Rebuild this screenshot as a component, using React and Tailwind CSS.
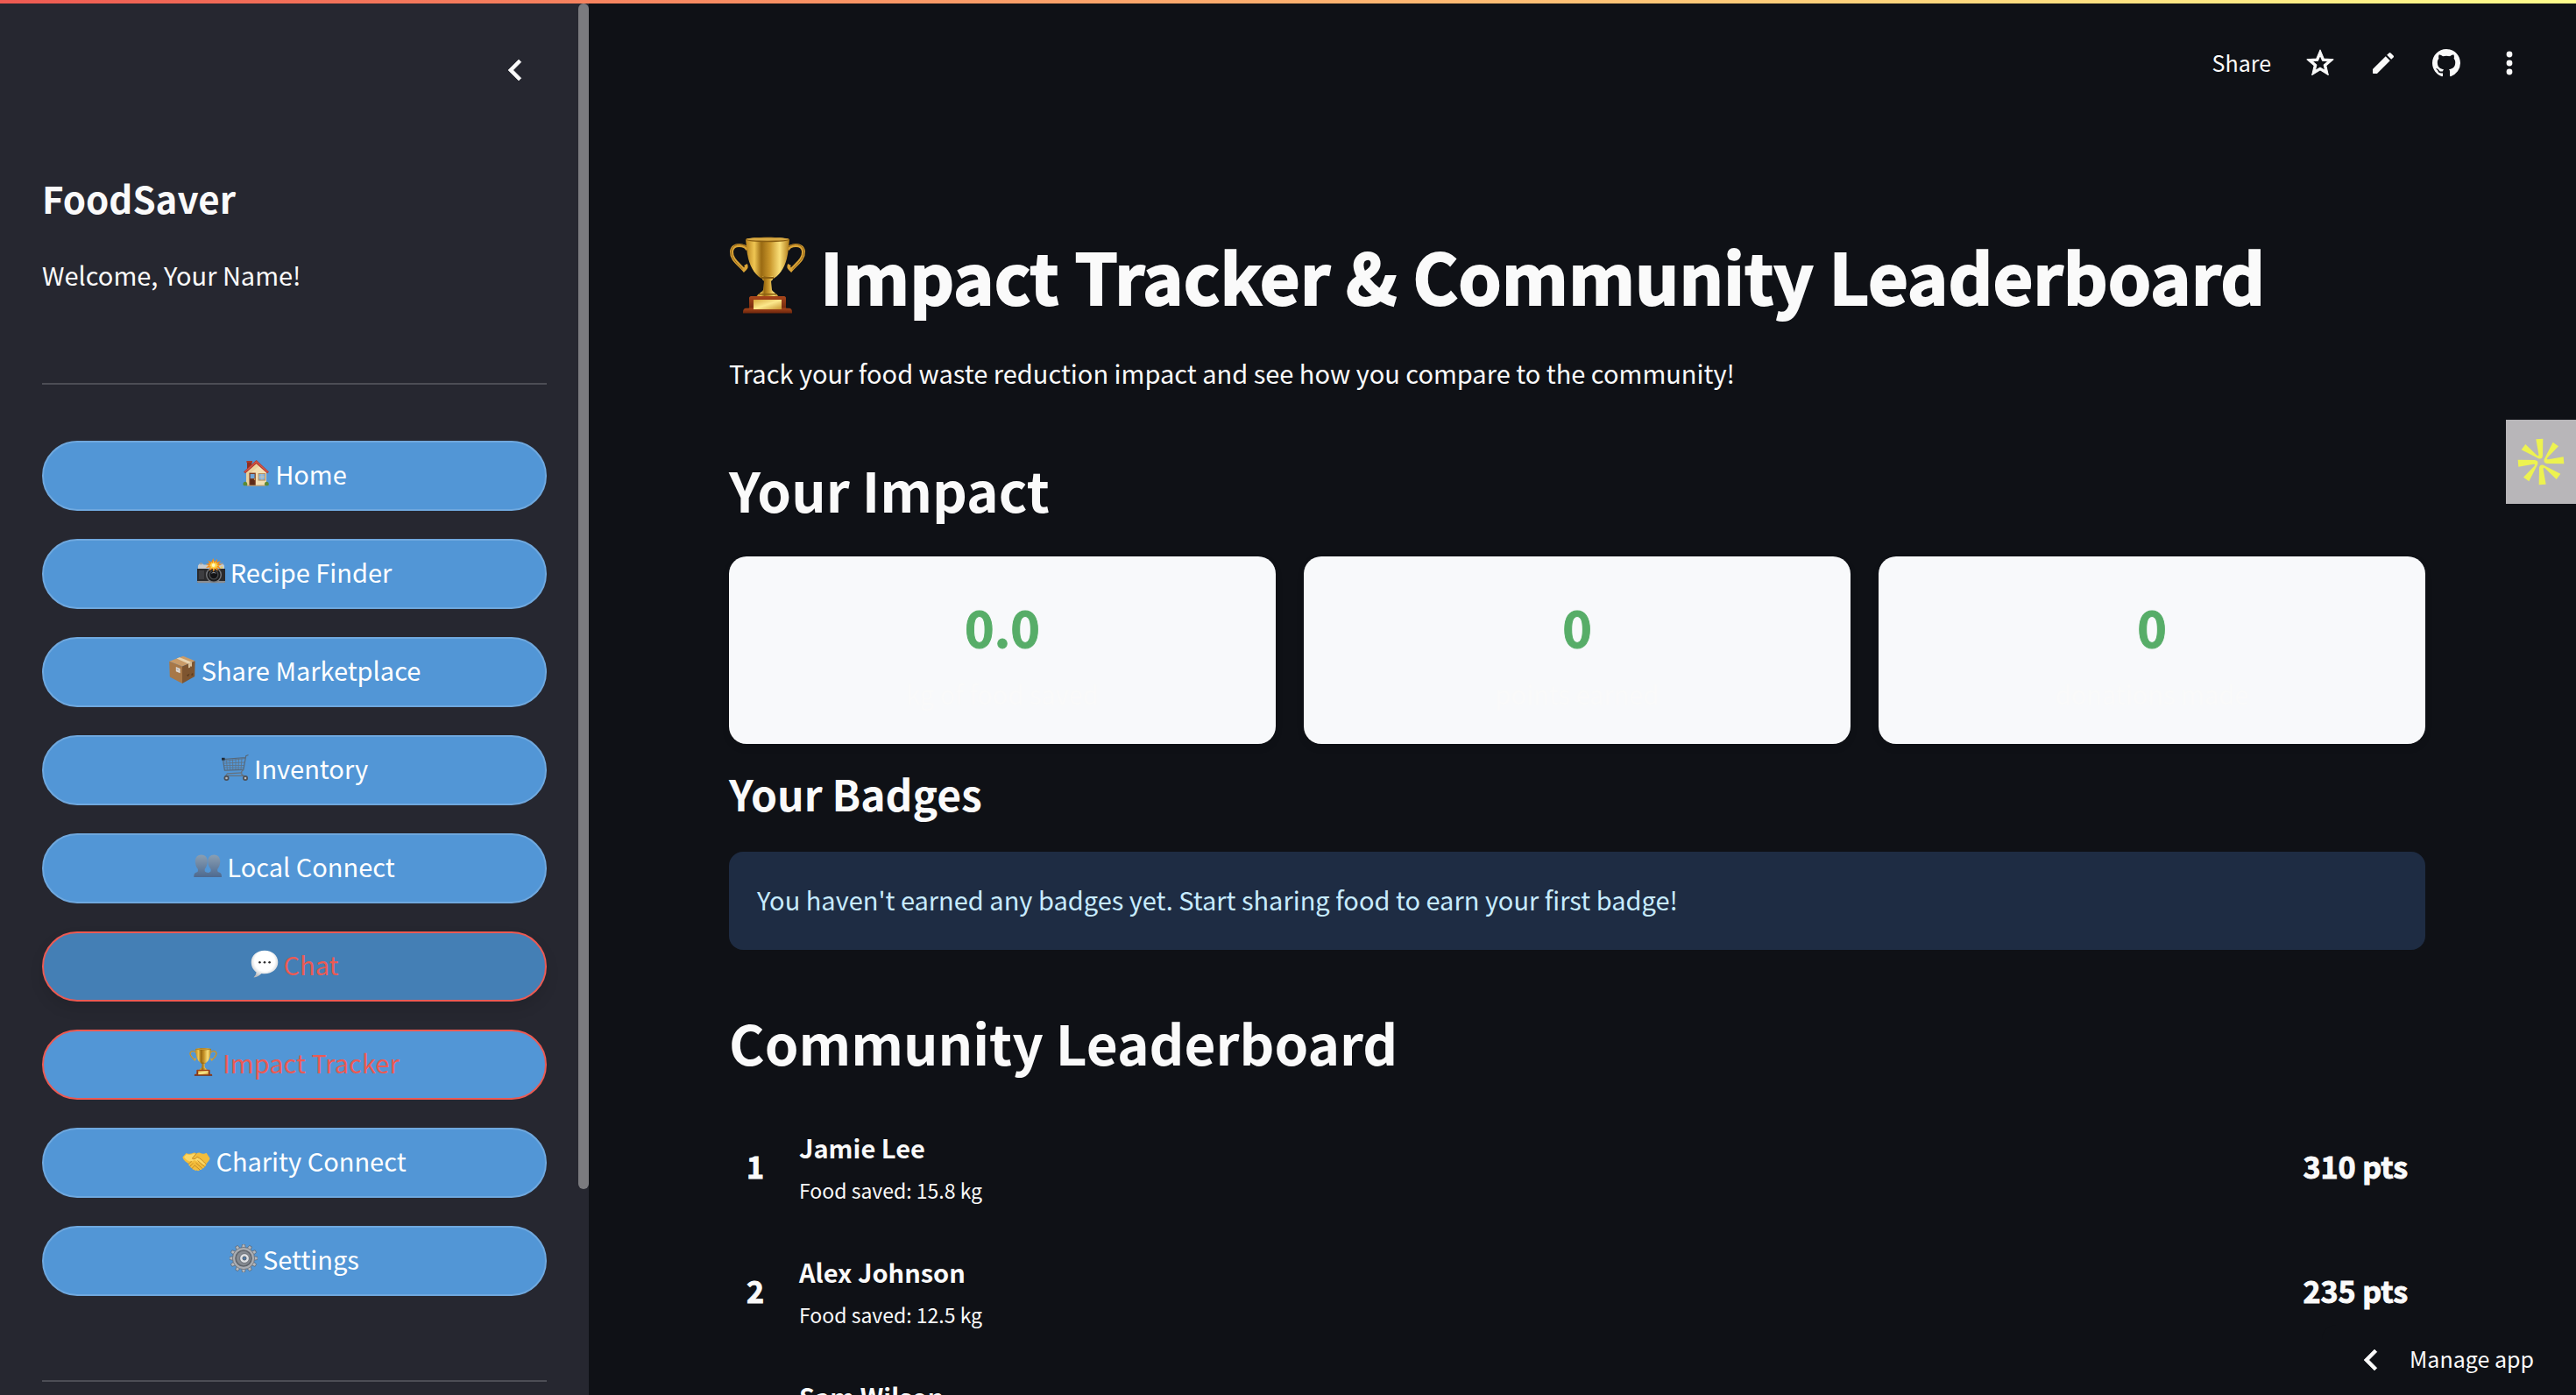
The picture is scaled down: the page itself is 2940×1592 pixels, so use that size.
import { useId } from "react";

/* ---------- Pictograms ---------- */

function HouseIcon() {
  return (
    <svg viewBox="0 0 32 32" className="size-8" aria-hidden="true">
      <path d="M6 3.2h5.4v7L6 14z" fill="#8f2e22" />
      <path d="M5.4 2h6.6v2H5.4z" fill="#a83c2c" />
      <path d="M5 15 16.5 4.5 28 15v15H5z" fill="#f3dfb2" />
      <path d="M5 15 16.5 4.5 20 7.7 8 17v13H5z" fill="#e4c990" opacity=".6" />
      <path d="M16.6 1 31 14.4l-2 1.9L16.6 5.2 4 16.3l-2-1.9z" fill="#b5382d" />
      <path d="M16.6 3.4 4 14.8l-.9-.6L16.6 2.2l13.3 12-.8.7z" fill="#d9604f" />
      <path d="M8.4 15.6h7.4V30H8.4z" fill="#7a3b22" />
      <path d="M9.6 17h5v5h-5z" fill="#6fa5d6" />
      <path d="M9.6 23.2h5V30h-5z" fill="#5d2a18" />
      <circle cx="14.6" cy="23" r=".8" fill="#e9bf4a" />
      <path d="M18.6 16h8.6v8.6h-8.6z" fill="#b78f5f" />
      <path d="M19.7 17h6.4v6.4h-6.4z" fill="#84b6e4" />
      <path d="M22.6 17h.7v6.4h-.7zM19.7 19.8h6.4v.7h-6.4z" fill="#d9c7a3" />
      <path d="M1.4 28.6c0-2.4 2-3.4 3.4-2.5 1.4.6 1.6 2 1.5 4.2H2.2c-.6-.3-.8-1-.8-1.7z" fill="#5b8a36" />
      <path d="M30.8 28.6c0-2.4-2-3.4-3.4-2.5-1.4.6-1.6 2-1.5 4.2H30c.6-.3.8-1 .8-1.7z" fill="#5b8a36" />
      <path d="M6 29.6h21V31H6z" fill="#a99b83" />
    </svg>
  );
}

function CameraIcon() {
  return (
    <svg viewBox="0 0 32 32" className="size-8" aria-hidden="true">
      <path d="M1 9.5 2.5 7.500h4l1 1H25l1-1h3.500L31 9.500V14H1z" fill="#c9cbcd" />
      <path d="M3 6.300h3v2H3zM25.500 6.300h4v2h-4z" fill="#9a9da0" />
      <path d="M0 13h32v14.500c0 1-.5 1.500-1.500 1.500h-29C.5 29 0 28.500 0 27.500z" fill="#2a2a2c" />
      <path d="M0 27h32v1c0 .8-.5 1.200-1.500 1.200h-29C.5 29.200 0 28.800 0 28z" fill="#8b8d90" />
      <path d="M2 15h6v10H2z" fill="#3d3d40" />
      <circle cx="19" cy="20" r="9" fill="#77797c" />
      <circle cx="19" cy="20" r="7.600" fill="#1c1c1e" />
      <circle cx="19" cy="20" r="5.600" fill="#46484b" />
      <circle cx="19" cy="20" r="4.200" fill="#131316" />
      <path d="M16 18.500c1-1.500 4.500-1.800 6 0-1.700-.7-4.300-.7-6 0z" fill="#aab3bb" />
      <path
        d="m18.500 1 1.300 4.200L23 1.800l-.5 4L27 4l-2.600 3.400 3.600 1-3.600 1.400 2.800 3.600-4.200-1.600.6 4-3.400-2.800-1.400 4-1.200-4-3.600 2.400.8-4L10 12l3.200-3L9.600 8l4.200-1.200L12.200 3.400l3.800 2z"
        fill="#f08c1c"
      />
      <path
        d="m18.500 3.500.9 3.200 2.100-2-.3 2.600 2.900-.9-1.900 2 2.600.9-2.600.7 1.500 2.200-2.600-1-.1 2.500-1.900-1.900-1 2.400-.7-2.500-2.300 1.300.8-2.500-2.800-.4 2.500-1.200-1.800-1.500 2.500.1-.7-2.200 2.200 1.400z"
        fill="#ffd84a"
      />
      <circle cx="18.600" cy="9" r="1.900" fill="#fff8c8" />
      <circle cx="28" cy="11.500" r="1.200" fill="#ead15a" />
    </svg>
  );
}

function PackageIcon() {
  return (
    <svg viewBox="0 0 32 32" className="size-8" aria-hidden="true">
      <path d="M1.200 6.800 17 .8l13.600 5.400L16 12.600z" fill="#c99b68" />
      <path d="M1.200 6.800 16 12.600V32L1.800 24.600z" fill="#a87848" />
      <path d="M16 12.600 30.600 6.200 30.200 24 16 32z" fill="#7e5530" />
      <path d="M9.500 3.600 13 2.300 27 7.700l-4 1.800z" fill="#e7d3b0" />
      <path d="M23 9.500 27 7.700v5l-1.400-.4-1 1.800-1.600.1z" fill="#d8c19b" />
      <path d="m8.800 13 4.800 1.900v5.400l-4.800-2z" fill="#e2dcd3" />
      <path d="m9.600 14.500 2.200.9v2.200l-2.200-.9z" fill="#b9b7bb" />
      <path d="m21 22.500 1.800 1.800 1.600-3.600zM26.500 21l1.800-.9v2.300l-1.800.9z" fill="#5b3b1d" />
    </svg>
  );
}

function CartIcon() {
  return (
    <svg viewBox="0 0 32 32" className="size-8" fill="none" aria-hidden="true">
      <g stroke="#5f7182" strokeWidth=".8">
        <path d="M3.500 8.500 28 5.500M3.500 11l24-1M4 13.500h22.800M4.300 16l21.800.3" />
        <path d="m6.500 7.500.9 11M10 7l.6 11.600M13.500 6.600l.3 12M17 6v12.600M20.500 5.600l-.5 12.800M24 5.200l-1 13.200" />
      </g>
      <path d="M31.500 1.500 28.700 2.700l-2.900 15.700-21.400.8-2-12.600L28 4.500" stroke="#56687a" strokeWidth="1.200" />
      <path d="M25.800 18.400c-4 3-3.300 4.600.2 6.900H5.500l2-2.500 17-.9" stroke="#65717d" strokeWidth="1.200" />
      <path d="M1 4.800h3.600v2.800H1z" fill="#1f2a36" />
      <circle cx="6.500" cy="28" r="3" fill="#4c4f55" />
      <circle cx="6.500" cy="28" r="1.300" fill="#b9bcc0" />
      <circle cx="28" cy="28" r="3" fill="#4c4f55" />
      <circle cx="28" cy="28" r="1.300" fill="#b9bcc0" />
    </svg>
  );
}

function PeopleIcon() {
  const id = useId();
  return (
    <svg viewBox="0 0 32 32" className="size-8" aria-hidden="true">
      <defs>
        <linearGradient id={id} x1="0" y1="0" x2="0" y2="1">
          <stop offset="0" stopColor="#8a9fb3" />
          <stop offset="1" stopColor="#4d698f" />
        </linearGradient>
      </defs>
      <path
        d="M23.300 3.500c4.300 0 7 3 7 7.600 0 3.400-1.300 6.800-3 8.600-.4 2 0 3.300 1.700 3.900 2.200.8 3 1.800 3 5.400H15c0-3.600.8-4.600 3-5.400 1.700-.6 1.900-1.900 1.500-3.900-1.700-1.800-3.200-5.200-3.200-8.600 0-4.600 2.700-7.600 7-7.600z"
        fill={`url(#${id})`}
      />
      <path
        d="M8.800 3.500c4.300 0 7 3 7 7.600 0 3.400-1.300 6.800-3 8.600-.4 2 0 3.300 1.700 3.900 3.700.8 5 1.800 5 5.400H.3c0-3.600.8-4.600 3-5.400C5 23 5.200 21.700 4.800 19.700c-1.700-1.800-3-5.200-3-8.600 0-4.600 2.700-7.600 7-7.600z"
        fill={`url(#${id})`}
      />
    </svg>
  );
}

function ChatIcon() {
  const id = useId();
  return (
    <svg viewBox="0 0 32 32" className="size-8" aria-hidden="true">
      <defs>
        <radialGradient id={id} cx=".5" cy=".4" r=".62">
          <stop offset=".6" stopColor="#ffffff" />
          <stop offset="1" stopColor="#b9bbbd" />
        </radialGradient>
      </defs>
      <path
        d="M16 .8c8.800 0 15.300 5.700 15.300 13.200S24.800 27.200 16 27.200c-1.200 0-2.400-.1-3.500-.3-2.300 2.300-5.200 4-9 4.500 1.800-1.800 2.800-3.600 3-5.900C3 23 .7 19 .7 14 .7 6.500 7.200.8 16 .8z"
        fill={`url(#${id})`}
      />
      <circle cx="10.400" cy="14.200" r="1.300" fill="#2b2b2d" />
      <circle cx="16" cy="14.200" r="1.300" fill="#2b2b2d" />
      <circle cx="21.600" cy="14.200" r="1.300" fill="#2b2b2d" />
    </svg>
  );
}

function TrophyIcon({ className }) {
  const id = useId();
  const gold = `${id}gold`;
  const wood = `${id}wood`;
  const plate = `${id}plate`;
  return (
    <svg viewBox="0 0 88 88" className={className} aria-hidden="true">
      <defs>
        <linearGradient id={gold} x1="0" x2="1" y1="0" y2="0">
          <stop offset="0" stopColor="#b9831c" />
          <stop offset=".2" stopColor="#efc653" />
          <stop offset=".36" stopColor="#9a6a12" />
          <stop offset=".55" stopColor="#c8952a" />
          <stop offset=".78" stopColor="#fae07a" />
          <stop offset="1" stopColor="#b07a17" />
        </linearGradient>
        <linearGradient id={wood} x1="0" x2="0" y1="0" y2="1">
          <stop offset="0" stopColor="#a8461b" />
          <stop offset="1" stopColor="#6d260c" />
        </linearGradient>
        <linearGradient id={plate} x1="0" x2="1" y1="0" y2="1">
          <stop offset="0" stopColor="#d8a93c" />
          <stop offset=".5" stopColor="#fbe88c" />
          <stop offset="1" stopColor="#c89530" />
        </linearGradient>
      </defs>
      <g fill="none" stroke="#d9a336" strokeWidth="4">
        <path d="M21 15c-2-6-17-8-18 2-.6 9 8 14 14 21 2-2 4-2 2-6" />
        <path d="M67 15c2-6 17-8 18 2 .6 9-8 14-14 21-2-2-4-2-2-6" />
      </g>
      <g fill="none" stroke="#8c5d12" strokeWidth="1">
        <path d="M20 12C15 7 3 8 2.500 17c0 8 7 14 13 20" />
        <path d="M68 12c5-5 17-4 17.500 5 0 8-7 14-13 20" />
      </g>
      <path d="M19 3c6-3 44-3 50 0-1 8-1 14-3 22-3 12-9 20-17 24H39c-8-4-14-12-17-24-2-8-2-14-3-22z" fill={`url(#${gold})`} />
      <ellipse cx="44" cy="3.600" rx="25" ry="2.600" fill="#8a5f12" />
      <ellipse cx="44" cy="3" rx="24" ry="1.700" fill="#d8a942" />
      <path d="M38 45h12v4l-2 2 1 10c2 3 6 4 8 8H31c2-4 6-5 8-8l1-10-2-2z" fill={`url(#${gold})`} />
      <path d="M37 46h14v2H37zM34 65h20v1.500H34z" fill="#8a5f12" />
      <path d="M25 68h38c1 0 2 1 2 2v14H23V70c0-1 1-2 2-2z" fill={`url(#${wood})`} />
      <path d="M18 82c4-1 48-1 52 0 2 1 2 3 2 5.500H16c0-2.500 0-4.500 2-5.500z" fill={`url(#${wood})`} />
      <path d="M28 72h32v11H28z" fill={`url(#${plate})`} />
    </svg>
  );
}

function HandshakeIcon() {
  return (
    <svg viewBox="0 -2 32 32" className="size-8" aria-hidden="true">
      <path
        d="M.4 10.500 4.600 6c3 1.300 5.400 1 8-.2 1.500-.6 2.400-.2 3.600.6 1.700-1 3-1.200 4.600-.4 2.300 1 4.400 1.100 6.800-.2L31.600 12c-.8 3-2.800 4.400-4.400 6.500.4 1.600-.5 2.700-1.800 2.800-.2 1.400-1.200 2.200-2.500 2.100-.5 1.300-1.600 1.900-2.800 1.600-.6 1.100-2.200 1.600-3.600.6-1.200.8-2.600.3-2.900-.8-1.500.2-2.400-.6-2.400-1.800-1.500 0-2.400-.9-2.200-2.200-1.500-.2-2.200-1.500-1.600-2.800C4.800 16.500 1.500 14.600.4 10.500z"
        fill="#f2bd3c"
      />
      <path d="M2 10.200 5 7.200c3 1.200 5.500.8 8-.4 1-.3 1.700-.1 2.300.4l-4 5c1.600 1.400 3.900.6 5.700-1.700 3.600 1.400 6 4.200 9.200 6.900 0 1.600-.9 2-1.900 1.800L14 14c-3 2.400-8 2.400-12-3.800z" fill="#fbd766" />
      <path
        d="M16.200 6.400 11.300 12c1.600 1.400 3.900.6 5.700-1.700 3.600 1.400 7 5 10.200 8.200M17.500 14.500l7.900 6.800M15.500 17l7.400 6.400M13.800 19.500l6.300 5.500M7.400 18.500c.9-1.500 2-2.600 3.400-3M9 21.300c1-1.700 2.200-3 3.500-3.600M11.200 23.500c.9-1.600 1.800-2.600 3-3.200"
        fill="none"
        stroke="#c08320"
        strokeWidth=".9"
      />
    </svg>
  );
}

const GEAR_TEETH = [0, 30, 60, 90, 120, 150, 180, 210, 240, 270, 300, 330];

function GearIcon() {
  return (
    <svg viewBox="0 0 32 32" className="size-8" aria-hidden="true">
      {GEAR_TEETH.map((angle) => (
        <path key={angle} d="m13.600 5 .9-5h3l.9 5z" fill="#b4b8be" stroke="#565b63" strokeWidth=".6" transform={`rotate(${angle} 16 16)`} />
      ))}
      <circle cx="16" cy="16" r="12.600" fill="#a9adb3" stroke="#565b63" strokeWidth=".6" />
      <circle cx="16" cy="16" r="9.800" fill="#5f646b" />
      <circle cx="16" cy="16" r="8.200" fill="#858a91" />
      <circle cx="17" cy="16" r="5.400" fill="#dfe1e4" stroke="#5d6269" strokeWidth=".8" />
      <circle cx="17" cy="16" r="2.100" fill="#4f7cab" stroke="#4a4f56" strokeWidth=".8" />
    </svg>
  );
}

function ChevronLeft() {
  return (
    <svg
      viewBox="0 0 24 24"
      className="size-12"
      fill="currentColor"
      stroke="currentColor"
      strokeWidth=".3"
      strokeLinejoin="round"
      aria-hidden="true"
    >
      <path d="M15.410 7.410 14 6l-6 6 6 6 1.410-1.410L10.830 12z" />
    </svg>
  );
}

function StarIcon() {
  return (
    <svg
      viewBox="0 0 24 24"
      className="size-9"
      fill="currentColor"
      stroke="currentColor"
      strokeWidth=".7"
      strokeLinejoin="round"
      aria-hidden="true"
    >
      <path d="M22 9.240l-7.190-.62L12 2 9.190 8.630 2 9.240l5.460 4.730L5.820 21 12 17.270 18.180 21l-1.630-7.030L22 9.240zM12 15.400l-3.760 2.270 1-4.280-3.320-2.880 4.380-.38L12 6.100l1.710 4.040 4.380.38-3.320 2.880 1 4.280L12 15.400z" />
    </svg>
  );
}

function PencilIcon() {
  return (
    <svg viewBox="0 0 24 24" className="size-8" fill="currentColor" aria-hidden="true">
      <path d="M3 17.460v3.040c0 .28.22.5.5.5h3.040c.13 0 .26-.05.35-.15L17.810 9.940l-3.750-3.750L3.150 17.100c-.1.100-.15.220-.15.360zM20.710 7.040a.996.996 0 0 0 0-1.410l-2.340-2.340a.996.996 0 0 0-1.410 0l-1.830 1.830 3.750 3.750 1.830-1.830z" />
    </svg>
  );
}

function GithubIcon() {
  return (
    <svg viewBox="0 0 16 16" className="size-8" fill="currentColor" aria-hidden="true">
      <path d="M8 0C3.580 0 0 3.580 0 8c0 3.540 2.290 6.530 5.470 7.590.4.070.55-.17.55-.38 0-.19-.01-.82-.01-1.490-2.010.37-2.530-.49-2.690-.94-.09-.23-.48-.94-.82-1.130-.28-.15-.68-.52-.01-.53.63-.01 1.080.58 1.230.82.72 1.210 1.870.87 2.330.66.070-.52.280-.87.510-1.070-1.780-.2-3.640-.89-3.640-3.950 0-.87.310-1.590.820-2.150-.08-.2-.36-1.020.08-2.120 0 0 .67-.21 2.200.82.640-.18 1.320-.27 2-.27.680 0 1.360.09 2 .27 1.530-1.040 2.200-.82 2.200-.82.440 1.100.160 1.920.080 2.120.510.560.820 1.270.820 2.150 0 3.070-1.870 3.750-3.650 3.950.290.250.540.730.540 1.480 0 1.070-.01 1.930-.01 2.200 0 .210.150.460.550.380A8.013 8.013 0 0 0 16 8c0-4.420-3.580-8-8-8z" />
    </svg>
  );
}

function DotsIcon() {
  return (
    <svg viewBox="0 0 32 32" className="size-8" fill="currentColor" aria-hidden="true">
      <circle cx="16" cy="6" r="3.400" />
      <circle cx="16" cy="16" r="3.400" />
      <circle cx="16" cy="26" r="3.400" />
    </svg>
  );
}

const BURST_ANGLES = [0, 90, 180, 270];

function BurstIcon() {
  return (
    <svg viewBox="-90 -90 180 180" className="size-15" fill="#edf250" aria-hidden="true">
      {BURST_ANGLES.map((angle) => (
        <path
          key={angle}
          d="M-17-77 7-79 6-22Q5-8-8-11L-67-41-53-60-15-23Q-7-17-8-26Z"
          transform={`rotate(${angle})`}
        />
      ))}
    </svg>
  );
}

/* ---------- Data ---------- */

const NORMAL = "border-[#6fa8de] bg-[#5296d6] text-white";

const NAV = [
  { label: "Home", icon: <HouseIcon />, style: NORMAL },
  { label: "Recipe Finder", icon: <CameraIcon />, style: NORMAL },
  { label: "Share Marketplace", icon: <PackageIcon />, style: NORMAL },
  { label: "Inventory", icon: <CartIcon />, style: NORMAL },
  { label: "Local Connect", icon: <PeopleIcon />, style: NORMAL },
  {
    label: "Chat",
    icon: <ChatIcon />,
    style: "border-[#ec5a53] bg-[#447fb5] text-[#ec5a53] shadow-[0_8px_16px_rgba(0,0,0,0.1)]",
  },
  {
    label: "Impact Tracker",
    icon: <TrophyIcon className="size-8" />,
    style: "border-[#ec5a53] bg-[#5296d6] text-[#ec5a53]",
  },
  { label: "Charity Connect", icon: <HandshakeIcon />, style: NORMAL },
  { label: "Settings", icon: <GearIcon />, style: NORMAL },
];

const METRICS = [
  { value: "0.0", label: "kg of food saved" },
  { value: "0", label: "points earned" },
  { value: "0", label: "donations made" },
];

const LEADERS = [
  { name: "Jamie Lee", saved: "15.8 kg", points: 310 },
  { name: "Alex Johnson", saved: "12.5 kg", points: 235 },
  { name: "Sam Wilson", saved: "10.2 kg", points: 180 },
];

/* ---------- Sections ---------- */

function Sidebar() {
  return (
    <aside className="relative w-[672px] shrink-0 overflow-hidden bg-[#262730] px-12">
      <div className="flex justify-end pt-14 pr-3">
        <button type="button" aria-label="Collapse sidebar">
          <ChevronLeft />
        </button>
      </div>
      <h2 className="mt-[93px] text-[42px] leading-[58px] font-semibold">FoodSaver</h2>
      <p className="mt-[34px] text-[29px] leading-12">Welcome, Your Name!</p>
      <hr className="mt-[100px] border-t-2 border-[#4c4d55]" />
      <nav className="mt-16 flex flex-col gap-8">
        {NAV.map((item) => (
          <button
            key={item.label}
            type="button"
            className={`flex h-20 items-center justify-center gap-1.5 rounded-full border-2 pb-1.5 text-[29px] leading-12 ${item.style}`}
          >
            {item.icon}
            <span>{item.label}</span>
          </button>
        ))}
      </nav>
      <hr className="mt-24 border-t-2 border-[#4c4d55]" />
      <div className="absolute top-1 right-0 h-[85%] w-3 rounded-full bg-[#7b7b7f]" />
    </aside>
  );
}

function Toolbar() {
  const iconButton = "flex size-10 items-center justify-center";
  return (
    <header className="flex h-36 items-center justify-end gap-8 pr-14">
      <button type="button" className="px-1 pb-0.5 text-[25px] leading-10">
        Share
      </button>
      <button type="button" aria-label="Favorite" className={iconButton}>
        <StarIcon />
      </button>
      <button type="button" aria-label="Edit" className={iconButton}>
        <PencilIcon />
      </button>
      <a href="#source" aria-label="View source" className={iconButton}>
        <GithubIcon />
      </a>
      <button type="button" aria-label="More options" className={iconButton}>
        <DotsIcon />
      </button>
    </header>
  );
}

export default function App() {
  return (
    <div className="relative flex h-screen overflow-hidden bg-[#0f1116] font-['Noto_Sans_CJK_SC','Source_Sans_Pro',sans-serif] text-[#fafafa]">
      <div className="absolute inset-x-0 top-0 z-10 h-1 bg-linear-to-r from-[#ee5a52] to-[#fffd8c]" />
      <Sidebar />
      <div className="min-w-0 flex-1">
        <Toolbar />
        <main className="pt-[117px] pr-[172px] pl-40">
          <h1 className="flex items-center gap-4 text-[79px] leading-[106px] font-bold [-webkit-text-stroke:2px_currentColor]">
            <TrophyIcon className="size-[88px] shrink-0" />
            <span>Impact Tracker &amp; Community Leaderboard</span>
          </h1>
          <p className="mt-[34px] text-[29px] leading-12">
            Track your food waste reduction impact and see how you compare to the community!
          </p>

          <h2 className="mt-[66px] text-[62px] leading-[86px] font-semibold">Your Impact</h2>
          <section className="mt-[34px] grid grid-cols-3 gap-8">
            {METRICS.map((metric) => (
              <div
                key={metric.label}
                className="rounded-[20px] bg-[#f8f9fb] pt-8 pb-[34px] text-center shadow-[0_4px_8px_rgba(0,0,0,0.1)]"
              >
                <div className="text-[57px] leading-[94px] font-bold text-[#57ad68] [-webkit-text-stroke:1px_currentColor]">
                  {metric.value}
                </div>
                <div className="mt-1.5 text-[29px] leading-12 text-[#fafafa]">{metric.label}</div>
              </div>
            ))}
          </section>

          <h3 className="mt-[22px] text-[48px] leading-[68px] font-semibold">Your Badges</h3>
          <p className="mt-[33px] rounded-2xl bg-[#1e2c43] px-8 pt-[30px] pb-[34px] text-[29px] leading-12 text-[#c7ebff]">
            You haven't earned any badges yet. Start sharing food to earn your first badge!
          </p>

          <h2 className="mt-[62px] text-[62px] leading-[86px] font-semibold">Community Leaderboard</h2>
          <ol className="mt-[33px] flex flex-col gap-2.5">
            {LEADERS.map((leader, index) => (
              <li key={leader.name} className="flex items-center px-5 py-5">
                <span className="w-15 text-[34px] leading-[50px] font-bold [-webkit-text-stroke:1px_currentColor]">
                  {index + 1}
                </span>
                <div className="flex-1">
                  <div className="text-[29px] leading-12 font-bold">{leader.name}</div>
                  <div className="mt-1.5 text-[23px] leading-[38px]">Food saved: {leader.saved}</div>
                </div>
                <span className="text-[34px] leading-[50px] font-bold [-webkit-text-stroke:1px_currentColor]">
                  {leader.points} pts
                </span>
              </li>
            ))}
          </ol>
        </main>
      </div>

      <button
        type="button"
        aria-label="Open assistant"
        className="absolute top-[479px] right-0 flex h-24 w-20 items-center justify-center bg-[#b8b6b9]"
      >
        <BurstIcon />
      </button>
      <button
        type="button"
        className="absolute right-0 bottom-0 flex h-20 items-center gap-5 rounded-tl-2xl bg-[#0f1116] pr-12 pl-8 text-[25px] leading-10"
      >
        <ChevronLeft />
        <span className="pb-1">Manage app</span>
      </button>
    </div>
  );
}
